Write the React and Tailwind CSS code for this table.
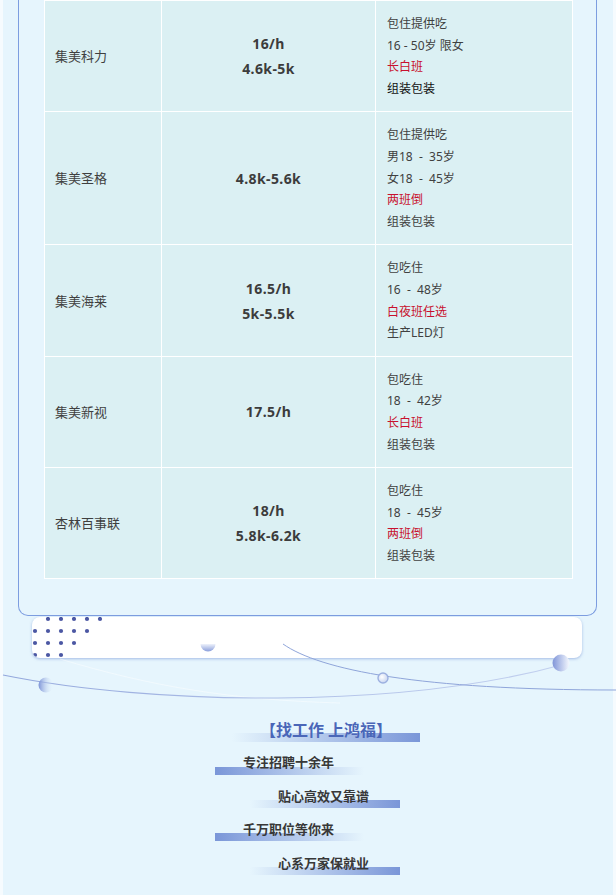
import React from 'react';

const rows = [
  {
    name: '集美科力',
    pay: ['16/h', '4.6k-5k'],
    info: [
      { t: '包住提供吃' },
      { t: '16 - 50岁 限女' },
      { t: '长白班', c: 'red' },
      { t: '组装包装', c: 'dark' },
    ],
  },
  {
    name: '集美圣格',
    pay: ['4.8k-5.6k'],
    info: [
      { t: '包住提供吃' },
      { t: '男18\u00a0 -\u00a0 35岁' },
      { t: '女18\u00a0 -\u00a0 45岁' },
      { t: '两班倒', c: 'red' },
      { t: '组装包装' },
    ],
  },
  {
    name: '集美海莱',
    pay: ['16.5/h', '5k-5.5k'],
    info: [
      { t: '包吃住' },
      { t: '16\u00a0 -\u00a0 48岁' },
      { t: '白夜班任选', c: 'red' },
      { t: '生产LED灯' },
    ],
  },
  {
    name: '集美新视',
    pay: ['17.5/h'],
    info: [
      { t: '包吃住' },
      { t: '18\u00a0 -\u00a0 42岁' },
      { t: '长白班', c: 'red' },
      { t: '组装包装' },
    ],
  },
  {
    name: '杏林百事联',
    pay: ['18/h', '5.8k-6.2k'],
    info: [
      { t: '包吃住' },
      { t: '18\u00a0 -\u00a0 45岁' },
      { t: '两班倒', c: 'red' },
      { t: '组装包装' },
    ],
  },
];

function infoClass(c) {
  if (c === 'red') return 'text-[#c8102e]';
  if (c === 'dark') return 'text-[#111111]';
  return 'text-[#404040]';
}

const dots = [
  [16, 2], [29, 2], [42, 2], [55, 2], [68, 2],
  [3, 14], [16, 14], [29, 14], [42, 14], [55, 14],
  [3, 26], [16, 26], [29, 26], [42, 26],
  [3, 38], [16, 38], [29, 38],
];

export default function App() {
  return (
    <div className="relative w-[616px] h-[895px] overflow-hidden bg-[#f6fbfe] font-['Noto_Sans','Noto_Sans_CJK_SC',sans-serif]">
      <div className="mx-[3px] h-[895px] bg-[#e6f5fd]">
        {/* card */}
        <div className="ml-[15px] mr-[16px] border-x border-b border-[#7d9de0] rounded-b-[10px] pl-[25px] pr-[24px] pb-[36px]">
          <table className="w-full table-fixed border-collapse">
            <colgroup>
              <col className="w-[117px]" />
              <col className="w-[214px]" />
              <col className="w-[197px]" />
            </colgroup>
            <tbody>
              {rows.map((r) => (
                <tr key={r.name} className="bg-[#dbf0f3]">
                  <td className="border border-white pl-[10px] py-3 align-middle text-[13px] leading-[20px] text-[#3f3f3f]">
                    {r.name}
                  </td>
                  <td className="border border-white py-3 align-middle text-center text-[14px] font-bold leading-[25px] tracking-[0.4px] text-[#3c3c3c]">
                    {r.pay.map((p) => (
                      <div key={p}>{p}</div>
                    ))}
                  </td>
                  <td className="border border-white pl-[11px] py-3 align-middle text-[12px] leading-[21.6px]">
                    {r.info.map((i, idx) => (
                      <div key={idx} className={infoClass(i.c)}>
                        {i.t}
                      </div>
                    ))}
                  </td>
                </tr>
              ))}
            </tbody>
          </table>
        </div>

        {/* white bar */}
        <div className="relative mt-[1px] ml-[29px] w-[550px] h-[41px] rounded-[8px] bg-white shadow-[0_1px_3px_rgba(110,140,210,0.55)] overflow-hidden">
          <svg className="absolute left-0 top-0" width="90" height="41" viewBox="0 0 90 41">
            {dots.map(([x, y], i) => (
              <circle key={i} cx={x} cy={y} r="2.1" fill="#4b57a3" />
            ))}
          </svg>
        </div>

        {/* slogans */}
        <div className="mt-[63px] ml-[229px] w-[188px] pb-[3px] text-center text-[16px] font-bold leading-[18px] text-[#4a66b8] bg-[linear-gradient(to_right,rgba(122,150,216,0),#7a96d8)] bg-no-repeat bg-bottom bg-[length:100%_9px]">
          【找工作 上鸿福】
        </div>
        <div className="mt-[12px] ml-[212px] w-[149px] pl-[28px] pb-[5px] text-[13px] font-bold leading-[16px] text-[#383838] bg-[linear-gradient(to_right,#7a96d8,rgba(122,150,216,0))] bg-no-repeat bg-bottom bg-[length:100%_8px]">
          专注招聘十余年
        </div>
        <div className="mt-[13px] ml-[247px] w-[150px] pl-[28px] pb-[4px] text-[13px] font-bold leading-[16px] text-[#383838] bg-[linear-gradient(to_right,rgba(122,150,216,0),#7a96d8)] bg-no-repeat bg-bottom bg-[length:100%_8px]">
          贴心高效又靠谱
        </div>
        <div className="mt-[13px] ml-[212px] w-[149px] pl-[28px] pb-[4px] text-[13px] font-bold leading-[16px] text-[#383838] bg-[linear-gradient(to_right,#7a96d8,rgba(122,150,216,0))] bg-no-repeat bg-bottom bg-[length:100%_8px]">
          千万职位等你来
        </div>
        <div className="mt-[14px] ml-[247px] w-[150px] pl-[28px] pb-[4px] text-[13px] font-bold leading-[16px] text-[#383838] bg-[linear-gradient(to_right,rgba(122,150,216,0),#7a96d8)] bg-no-repeat bg-bottom bg-[length:100%_8px]">
          心系万家保就业
        </div>
      </div>

      {/* decorative curves */}
      <svg
        className="absolute left-0 top-[600px] pointer-events-none"
        width="616"
        height="112"
        viewBox="0 600 616 112"
      >
        <defs>
          <linearGradient id="sphL" x1="0" y1="0" x2="1" y2="0">
            <stop offset="0" stopColor="#7c92d6" />
            <stop offset="1" stopColor="#e6f5fd" stopOpacity="0" />
          </linearGradient>
          <linearGradient id="sphR" x1="0" y1="0" x2="1" y2="0">
            <stop offset="0" stopColor="#8095d8" />
            <stop offset="1" stopColor="#f4f8fe" />
          </linearGradient>
          <linearGradient id="half" x1="0" y1="0" x2="0" y2="1">
            <stop offset="0" stopColor="#eef2fb" />
            <stop offset="1" stopColor="#8a9edb" />
          </linearGradient>
          <radialGradient id="ring" cx="0.4" cy="0.4" r="0.6">
            <stop offset="0" stopColor="#ffffff" />
            <stop offset="1" stopColor="#c9d6f1" />
          </radialGradient>
          <linearGradient id="arc" x1="0" y1="0" x2="1" y2="0">
            <stop offset="0" stopColor="#93a7dc" />
            <stop offset="0.6" stopColor="#b5c5ea" />
            <stop offset="1" stopColor="#c2d0ef" />
          </linearGradient>
        </defs>
        <path d="M60 659 C 150 686, 230 700, 340 703" fill="none" stroke="#ffffff" strokeOpacity="0.45" strokeWidth="1" />
        <path d="M3 675 C 150 705, 400 710, 565 664" fill="none" stroke="url(#arc)" strokeWidth="1.1" />
        <path d="M283 644 C 320 670, 420 690, 616 690" fill="none" stroke="#8fa5da" strokeWidth="1" />
        <path d="M200.5 644 A7.5 7.5 0 0 0 215.5 644 Z" fill="url(#half)" />
        <circle cx="383" cy="678" r="5" fill="url(#ring)" stroke="#9cb0e0" strokeWidth="1.4" />
        <circle cx="46" cy="685" r="7.5" fill="url(#sphL)" />
        <circle cx="561" cy="663" r="8.5" fill="url(#sphR)" />
      </svg>
    </div>
  );
}
